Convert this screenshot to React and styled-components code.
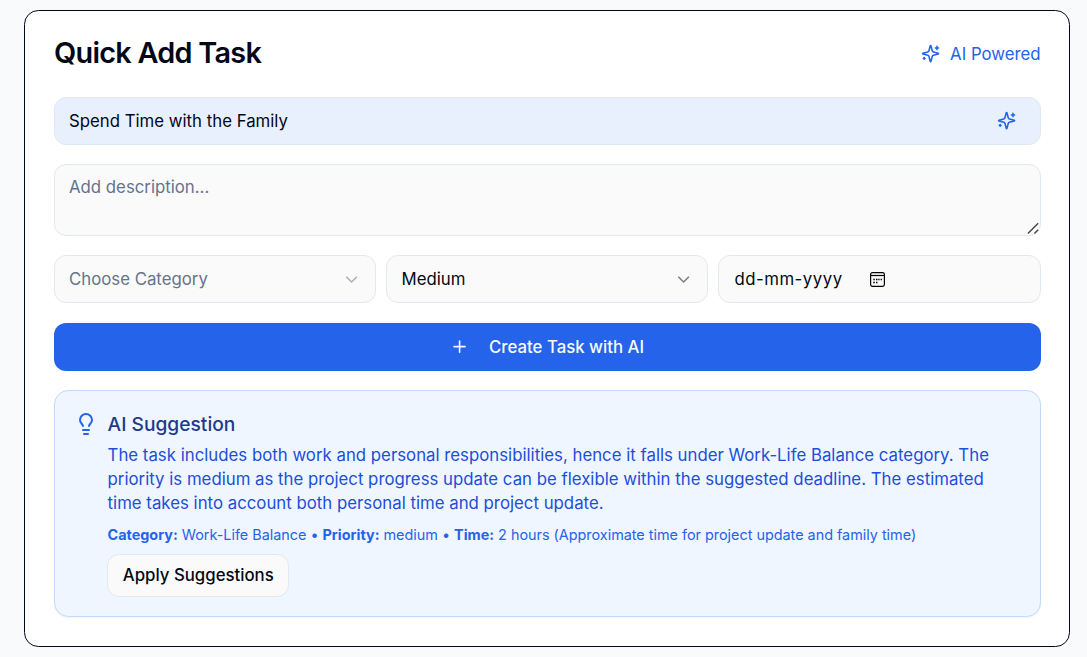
import React from "react";
import styled, { createGlobalStyle } from "styled-components";
import { Lightbulb, Plus, ChevronDown } from "lucide-react";

const GlobalStyle = createGlobalStyle`
  *, *::before, *::after { box-sizing: border-box; }
  body {
    margin: 0;
    background: #f9fafb;
    color: #020817;
    font-family: Inter, "Liberation Sans", sans-serif;
    font-size: 16.8px;
    line-height: 24px;
  }
  svg { display: block; flex-shrink: 0; }
`;

const Page = styled.main`
  padding: 10px 17px 10px 24px;
  height: 657px;
  overflow: hidden;
`;

const Card = styled.section`
  height: 637px;
  padding: 28px 28.4px 0 28.8px;
  background: #fff;
  border: 1px solid #020817;
  border-radius: 14.4px;
`;

const Header = styled.header`
  display: flex;
  justify-content: space-between;
  align-items: center;
  height: 29px;
  margin-bottom: 29px;
`;

const Title = styled.h2`
  margin: 0;
  padding-left: 0.2px;
  font-size: 28.8px;
  line-height: 28.8px;
  font-weight: 600;
  letter-spacing: -0.72px;
`;

const PoweredBy = styled.div`
  display: flex;
  align-items: center;
  gap: 9.6px;
  padding-top: 1px;
  color: #2563eb;
`;

const Form = styled.div`
  display: flex;
  flex-direction: column;
  gap: 19.2px;
`;

const Field = styled.div`
  display: flex;
  align-items: center;
  justify-content: ${(p) => (p.$start ? "flex-start" : "space-between")};
  gap: ${(p) => p.$gap || 0}px;
  height: 48px;
  padding: 0 ${(p) => p.$right || 14.4}px 0 ${(p) => p.$left || 14.2}px;
  border: 1px solid #e2e8f0;
  border-radius: 12px;
  background: ${(p) => (p.$filled ? "#e8f0fe" : "#fafafa")};
  color: ${(p) => (p.$muted ? "#64748b" : "#020817")};
`;

const SparkButton = styled.span`
  color: #2563eb;
`;

const TextArea = styled.div`
  display: flex;
  justify-content: space-between;
  height: 72px;
  padding: 9.8px 0 0 14.2px;
  border: 1px solid #e2e8f0;
  border-radius: 12px;
  background: #fafafa;
  color: #64748b;
`;

const Grip = styled.svg`
  align-self: flex-end;
`;

const Columns = styled.div`
  display: grid;
  grid-template-columns: repeat(3, 1fr);
  gap: 9.6px;
`;

const Chevron = styled(ChevronDown)`
  color: #020817;
  opacity: ${(p) => (p.$faint ? 0.3 : 0.5)};
`;

const DateText = styled.span`
  white-space: pre;
  letter-spacing: 0.5px;
`;

const CreateButton = styled.button`
  display: flex;
  align-items: center;
  justify-content: center;
  gap: 19.6px;
  height: 48px;
  padding: 0 0.2px 0 0;
  border: 0;
  border-radius: 12px;
  background: #2563eb;
  color: #f8fafc;
  font: 500 16.8px/24px Inter, sans-serif;
`;

const Suggestion = styled.section`
  display: flex;
  gap: 9.6px;
  height: 227px;
  padding: 19.2px;
  border: 1px solid #bfdbfe;
  border-radius: 14.4px;
  background: #eff6ff;
  box-shadow: 0 1px 2px rgba(0, 0, 0, 0.05);
`;

const SuggestionIcon = styled.div`
  padding-top: 2px;
  color: #2563eb;
`;

const SuggestionBody = styled.div`
  flex: 1;
`;

const SuggestionTitle = styled.h3`
  margin: 0;
  font-size: 19.2px;
  line-height: 28.8px;
  font-weight: 500;
  color: #1e3a8a;
`;

const SuggestionText = styled.p`
  margin: 4px 0 0;
  letter-spacing: 0.006px;
  color: #1d4ed8;
`;

const Meta = styled.p`
  margin: 10.4px 0 0;
  font-size: 14.4px;
  line-height: 19.2px;
  letter-spacing: -0.006px;
  color: #2563eb;
`;

const ApplyButton = styled.button`
  margin: 9.6px 0 0 -0.2px;
  height: 43px;
  padding: 0 14.4px;
  border: 1px solid #e2e8f0;
  border-radius: 12px;
  background: #fafafa;
  color: #020817;
  font: 500 16.8px/24px Inter, sans-serif;
`;

const Sparkles = () => (
  <svg width="19.2" height="19.2" viewBox="0 0 24 24" fill="none" stroke="currentColor" strokeWidth="2" strokeLinecap="round" strokeLinejoin="round">
    <path d="M9.937 15.5A2 2 0 0 0 8.5 14.063l-6.135-1.582a.5.5 0 0 1 0-.962L8.5 9.936A2 2 0 0 0 9.937 8.5l1.582-6.135a.5.5 0 0 1 .963 0L14.063 8.5A2 2 0 0 0 15.5 9.937l6.135 1.581a.5.5 0 0 1 0 .964L15.5 14.063a2 2 0 0 0-1.437 1.437l-1.582 6.135a.5.5 0 0 1-.963 0z" />
    <path d="M20 3v4M22 5h-4M4 17v2M5 18H3" />
  </svg>
);

const CalendarGlyph = () => (
  <svg width="15" height="15" viewBox="0 0 15 15" fill="none" stroke="#000">
    <rect x=".6" y=".6" width="13.8" height="13.8" rx="1.8" strokeWidth="1.2" />
    <path d="M1 3.5h13" strokeWidth="1.2" />
    <path d="M3.3 7.5h1.5M6 7.5h1.5M8.3 7.5h1.3M10.6 7.5h1.3M3.3 10.5h1.5M6 10.5h1.5" strokeWidth="1.4" />
  </svg>
);

export default function App() {
  return (
    <>
      <GlobalStyle />
      <Page>
        <Card>
          <Header>
            <Title>Quick Add Task</Title>
            <PoweredBy>
              <Sparkles />
              AI Powered
            </PoweredBy>
          </Header>
          <Form>
            <Field $filled $right={23.6}>
              <span>Spend Time with the Family</span>
              <SparkButton><Sparkles /></SparkButton>
            </Field>
            <TextArea>
              <span>Add description...</span>
              <Grip width="13" height="13" viewBox="0 0 13 13" fill="none" stroke="#444" strokeWidth="1.4">
                <path d="M.9 11.5L11.2 1.2M7.4 11.5L11.2 7.8" />
              </Grip>
            </TextArea>
            <Columns>
              <Field $muted>
                <span>Choose Category</span>
                <Chevron size={19.2} $faint />
              </Field>
              <Field $left={14.6}>
                <span>Medium</span>
                <Chevron size={19.2} />
              </Field>
              <Field $start $gap={27.4} $left={15.4}>
                <DateText>dd-mm-yyyy</DateText>
                <CalendarGlyph />
              </Field>
            </Columns>
            <CreateButton>
              <Plus size={19.2} />
              Create Task with AI
            </CreateButton>
            <Suggestion>
              <SuggestionIcon><Lightbulb size={24} /></SuggestionIcon>
              <SuggestionBody>
                <SuggestionTitle>AI Suggestion</SuggestionTitle>
                <SuggestionText>
                  The task includes both work and personal responsibilities, hence it falls under Work-Life Balance category. The
                  priority is medium as the project progress update can be flexible within the suggested deadline. The estimated
                  time takes into account both personal time and project update.
                </SuggestionText>
                <Meta>
                  <strong>Category:</strong> Work-Life Balance • <strong>Priority:</strong> medium • <strong>Time:</strong> 2 hours
                  (Approximate time for project update and family time)
                </Meta>
                <ApplyButton>Apply Suggestions</ApplyButton>
              </SuggestionBody>
            </Suggestion>
          </Form>
        </Card>
      </Page>
    </>
  );
}
